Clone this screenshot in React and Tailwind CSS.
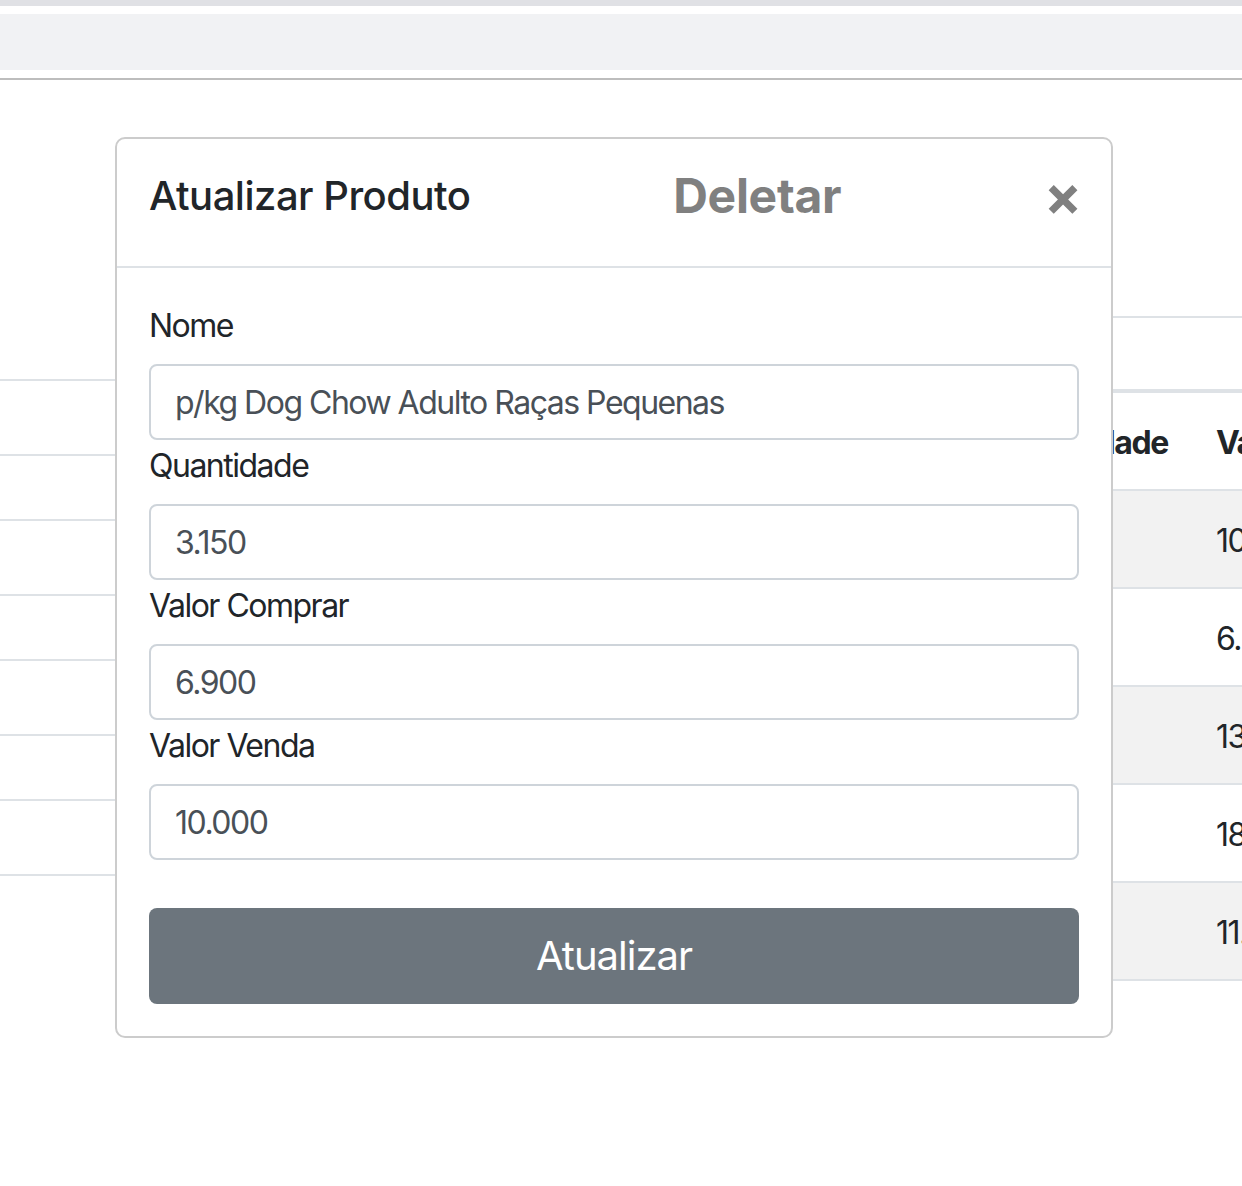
import { useState } from 'react'

const leftRows = [75, 65, 75, 65, 75, 65, 75]

const tableRows = ['10.000', '6.900', '13.000', '18.000', '11.000']

const fields = [
  { label: 'Nome', value: 'p/kg Dog Chow Adulto Raças Pequenas' },
  { label: 'Quantidade', value: '3.150' },
  { label: 'Valor Comprar', value: '6.900' },
  { label: 'Valor Venda', value: '10.000' }
]

function App() {
  const [form, setForm] = useState(fields)

  return (
    <div
      className="relative w-[1242px] h-[1186px] overflow-hidden bg-white text-[#212529]"
      style={{ fontFamily: 'Inter, "Noto Sans", sans-serif' }}
    >
      {/* top bars */}
      <div className="h-[6px] bg-[#e0e1e5]" />
      <div className="h-[8px] bg-white" />
      <div className="h-[56px] bg-[#f1f2f4]" />
      <div className="h-[8px] bg-white" />
      <div className="h-[2px] bg-[#bdbdbd]" />

      {/* page content behind the modal */}
      <div className="flex">
        <div className="w-[600px] shrink-0 pt-[299px]">
          <div className="border-t-2 border-[#dee2e6]" />
          {leftRows.map((h, i) => (
            <div key={i} className="border-b-2 border-[#dee2e6]" style={{ height: h }} />
          ))}
        </div>
        <div className="flex-1 min-w-0 overflow-hidden pt-[236px] whitespace-nowrap text-[32px] tracking-[-1.4px]">
          <div className="h-[73px] border-t-2 border-[#dee2e6]" />
          <div className="flex h-[102px] items-center border-t-4 border-b-2 border-[#dee2e6] font-bold pt-1">
            <div className="w-[592px] shrink-0 pr-6 text-right">Quantidade</div>
            <div className="shrink-0 pl-6">Valor Venda</div>
          </div>
          {tableRows.map((v, i) => (
            <div
              key={i}
              className={`flex h-[98px] items-center border-b-2 border-[#dee2e6] pt-1 ${i % 2 === 0 ? 'bg-[#f2f2f2]' : 'bg-white'}`}
            >
              <div className="w-[592px] shrink-0" />
              <div className="shrink-0 pl-6">{v}</div>
            </div>
          ))}
        </div>
      </div>

      {/* modal */}
      <div className="absolute left-[115px] top-[137px] w-[998px] rounded-[10px] border-2 border-[#cccccc] bg-white">
        <div className="flex h-[129px] items-center justify-between border-b-2 border-[#dee2e6] px-8 pb-[14px]">
          <h5 className="text-[40px] font-medium tracking-[-0.5px]">Atualizar Produto</h5>
          <span className="text-[48px] font-bold text-[#808080] tracking-[-0.3px]">Deletar</span>
          <button className="text-[56px] font-bold leading-none text-[#808080] -mr-[3px]">×</button>
        </div>
        <div className="px-8 pt-8 pb-8 tracking-[-1.5px]">
          {form.map((f, i) => (
            <div key={f.label}>
              <label className="block h-[48px] text-[32px] leading-[48px] mb-4 pt-[2px]">{f.label}</label>
              <input
                type="text"
                value={f.value}
                onChange={(e) => {
                  const next = [...form]
                  next[i] = { ...f, value: e.target.value }
                  setForm(next)
                }}
                className="block h-[76px] w-full rounded-lg border-2 border-[#ced4da] px-6 text-[32px] text-[#495057] outline-none tracking-[-1.5px]"
              />
            </div>
          ))}
          <button className="mt-12 h-[96px] w-full rounded-lg bg-[#6c757d] text-[40px] text-white tracking-[-1px]">
            Atualizar
          </button>
        </div>
      </div>
    </div>
  )
}

export default App
